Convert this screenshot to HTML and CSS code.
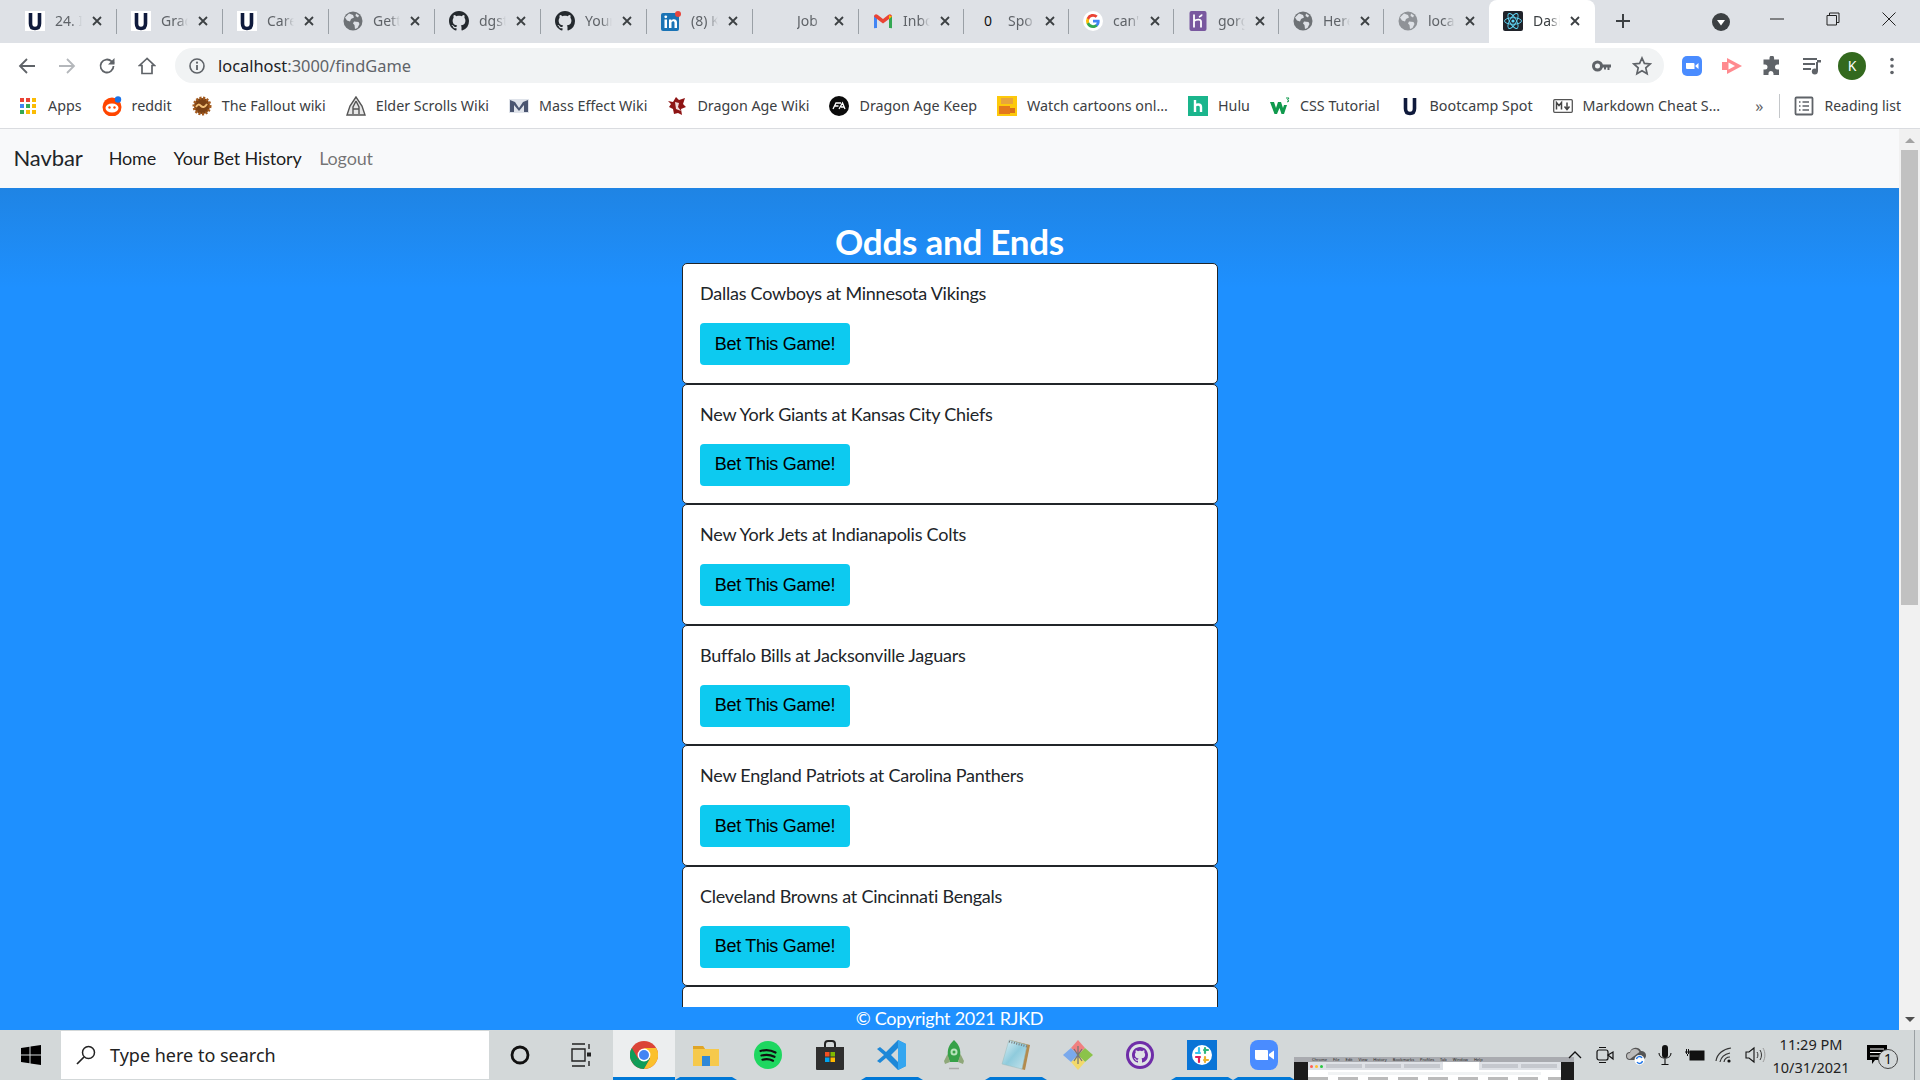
FILE: index.html
```html
<!DOCTYPE html>
<html lang="en">
<head>
  <meta charset="UTF-8" />
  <title>Dashboard</title>
  <link rel="stylesheet" href="styles.css">
</head>
<body>
  <svg class="defs" xmlns="http://www.w3.org/2000/svg">
    <symbol id="i-u" viewBox="0 0 20 20"><rect width="20" height="20" fill="#fff"/><path d="M5.500 2v10.500c0 3.600 1.800 5 4.500 5s4.500-1.400 4.500-5V2" fill="none" stroke="#0f1a3c" stroke-width="3.600"/></symbol>
    <symbol id="i-globe" viewBox="0 0 20 20"><circle cx="10" cy="10" r="9.500" fill="#6e7276"/><path d="M6 2.500l4 1.500 1 2.500-3 1.500-1 2.500-3-1-2-3zM11 10.500l4.500.5 1 2-2 4-2.500 1-.5-4-1.500-1.500zM13 2.500l3 2-1 2-2.500-1.500z" fill="#dee1e6"/></symbol>
    <symbol id="i-gh" viewBox="0 0 16 16"><path d="M8 0C3.580 0 0 3.580 0 8c0 3.540 2.290 6.530 5.470 7.590.4.070.55-.17.55-.38 0-.19-.01-.82-.01-1.490-2.010.37-2.530-.49-2.690-.94-.09-.23-.48-.94-.82-1.130-.28-.15-.68-.52-.01-.53.63-.01 1.080.58 1.230.82.72 1.210 1.870.87 2.330.66.07-.52.28-.87.51-1.070-1.780-.2-3.640-.89-3.640-3.950 0-.87.31-1.590.82-2.150-.08-.2-.36-1.020.08-2.120 0 0 .67-.21 2.200.82.64-.18 1.320-.27 2-.27.68 0 1.360.09 2 .27 1.530-1.040 2.200-.82 2.200-.82.44 1.100.16 1.920.08 2.120.51.56.82 1.270.82 2.150 0 3.070-1.870 3.750-3.650 3.950.29.25.54.73.54 1.480 0 1.070-.01 1.930-.01 2.200 0 .21.15.46.55.38A8.013 8.013 0 0016 8c0-4.420-3.580-8-8-8z" fill="currentColor"/></symbol>
    <symbol id="i-x" viewBox="0 0 12 12"><path d="M2 2l8 8M10 2l-8 8" stroke="#3c4043" stroke-width="1.800" fill="none"/></symbol>
    <linearGradient id="g-note" x1="0" y1="0" x2="1" y2="1"><stop offset="0" stop-color="#e4f3f7"/><stop offset=".5" stop-color="#8fcbdc"/><stop offset="1" stop-color="#c9e4ec"/></linearGradient>
  </svg>

  <div class="tabstrip">
    <div class="tab"><svg class="fav"><use href="#i-u"/></svg><span class="tab-title">24. I</span><svg class="tab-x"><use href="#i-x"/></svg></div>
    <div class="tab"><svg class="fav"><use href="#i-u"/></svg><span class="tab-title">Grad</span><svg class="tab-x"><use href="#i-x"/></svg></div>
    <div class="tab"><svg class="fav"><use href="#i-u"/></svg><span class="tab-title">Care</span><svg class="tab-x"><use href="#i-x"/></svg></div>
    <div class="tab"><svg class="fav"><use href="#i-globe"/></svg><span class="tab-title">Gett</span><svg class="tab-x"><use href="#i-x"/></svg></div>
    <div class="tab"><svg class="fav dark"><use href="#i-gh"/></svg><span class="tab-title">dgst</span><svg class="tab-x"><use href="#i-x"/></svg></div>
    <div class="tab"><svg class="fav dark"><use href="#i-gh"/></svg><span class="tab-title">Your</span><svg class="tab-x"><use href="#i-x"/></svg></div>
    <div class="tab">
      <svg class="fav" viewBox="0 0 20 20"><rect y="2" width="18" height="18" rx="2" fill="#1a73b5"/><circle cx="17" cy="3" r="3" fill="#e8453c"/><path d="M3.500 8.500h2.500V17H3.500zM8 8.500h2.400v1.200c.6-.9 1.500-1.400 2.600-1.400 2 0 3 1.200 3 3.400V17h-2.500v-5c0-1.100-.5-1.700-1.400-1.700-1 0-1.600.7-1.600 1.800V17H8z" fill="#fff"/><circle cx="4.750" cy="5.800" r="1.400" fill="#fff"/></svg>
      <span class="tab-title">(8) K</span><svg class="tab-x"><use href="#i-x"/></svg>
    </div>
    <div class="tab"><span class="fav"></span><span class="tab-title">Job</span><svg class="tab-x"><use href="#i-x"/></svg></div>
    <div class="tab">
      <svg class="fav" viewBox="0 0 20 20"><path d="M1 17V5l3 1v11H2.500A1.500 1.500 0 011 17z" fill="#4285f4"/><path d="M19 17V5l-3 1v11h1.500A1.500 1.500 0 0019 17z" fill="#34a853"/><path d="M1 5.500C1 3.500 3 2.500 4.500 3.700L10 8l5.500-4.300C17 2.500 19 3.500 19 5.500L16 8l-6 4.500L4 8z" fill="#ea4335"/><path d="M16 4.200l3 1.300L16 8z" fill="#fbbc04"/></svg>
      <span class="tab-title">Inbox</span><svg class="tab-x"><use href="#i-x"/></svg>
    </div>
    <div class="tab"><span class="fav fav-zero">0</span><span class="tab-title">Spo</span><svg class="tab-x"><use href="#i-x"/></svg></div>
    <div class="tab">
      <svg class="fav" viewBox="0 0 24 24"><circle cx="12" cy="12" r="12" fill="#fff"/><path d="M20 12.200c0-.6-.1-1.200-.2-1.700H12v3.200h4.500a3.900 3.900 0 01-1.700 2.500v2.100h2.700c1.600-1.400 2.500-3.500 2.500-6.100z" fill="#4285f4"/><path d="M12 20.400c2.300 0 4.200-.8 5.500-2.100l-2.700-2.100c-.7.5-1.700.8-2.800.8-2.200 0-4-1.500-4.700-3.400H4.500v2.100a8.300 8.300 0 007.500 4.700z" fill="#34a853"/><path d="M7.300 13.600a5 5 0 010-3.200V8.300H4.500a8.300 8.300 0 000 7.400z" fill="#fbbc05"/><path d="M12 6.900c1.200 0 2.300.4 3.200 1.200l2.400-2.400A8.300 8.300 0 004.500 8.300l2.800 2.100C8 8.400 9.800 6.900 12 6.900z" fill="#ea4335"/></svg>
      <span class="tab-title">can'</span><svg class="tab-x"><use href="#i-x"/></svg>
    </div>
    <div class="tab">
      <svg class="fav" viewBox="0 0 20 20"><rect x="1.500" width="17" height="20" rx="2" fill="#79589f"/><path d="M6 3.500v13M6 10c2-1.500 7-2.500 7 .5v6M14 3.500c-.5 1.500-1.500 2-3 2.500" fill="none" stroke="#fff" stroke-width="1.800"/></svg>
      <span class="tab-title">gorg</span><svg class="tab-x"><use href="#i-x"/></svg>
    </div>
    <div class="tab"><svg class="fav"><use href="#i-globe"/></svg><span class="tab-title">Here</span><svg class="tab-x"><use href="#i-x"/></svg></div>
    <div class="tab tab-last"><svg class="fav faded"><use href="#i-globe"/></svg><span class="tab-title">loca</span><svg class="tab-x"><use href="#i-x"/></svg></div>
    <div class="tab tab-active">
      <svg class="fav" viewBox="0 0 20 20"><rect width="20" height="20" rx="2" fill="#20232a"/><g fill="none" stroke="#61dafb" stroke-width=".9"><ellipse cx="10" cy="10" rx="8.500" ry="3.300"/><ellipse cx="10" cy="10" rx="8.500" ry="3.300" transform="rotate(60 10 10)"/><ellipse cx="10" cy="10" rx="8.500" ry="3.300" transform="rotate(120 10 10)"/></g><circle cx="10" cy="10" r="1.600" fill="#61dafb"/></svg>
      <span class="tab-title">Dash</span><svg class="tab-x"><use href="#i-x"/></svg>
    </div>
    <svg class="tab-plus" viewBox="0 0 16 16"><path d="M8 1v14M1 8h14" stroke="#3c4043" stroke-width="2"/></svg>
    <svg class="tab-search" viewBox="0 0 18 18"><circle cx="9" cy="9" r="9" fill="#3c4043"/><path d="M5 7h8l-4 5.500z" fill="#fff"/></svg>
    <div class="win-btns">
      <svg class="win-btn" viewBox="0 0 14 14"><path d="M0 7h14" stroke="#222" stroke-width="1"/></svg>
      <svg class="win-btn" viewBox="0 0 14 14"><path d="M1 3.500h9.500V13H1zM3.500 3.500V1H13v9.500h-2.500" fill="none" stroke="#222" stroke-width="1"/></svg>
      <svg class="win-btn" viewBox="0 0 14 14"><path d="M.5.500l13 13M13.500.500l-13 13" stroke="#222" stroke-width="1"/></svg>
    </div>
  </div>

  <div class="toolbar">
    <svg class="tool" viewBox="0 0 18 18"><path d="M17 9H2M9 2L2 9l7 7" fill="none" stroke="#5f6368" stroke-width="1.800"/></svg>
    <svg class="tool" viewBox="0 0 18 18"><path d="M1 9h15M9 2l7 7-7 7" fill="none" stroke="#b4b7bb" stroke-width="1.800"/></svg>
    <svg class="tool" viewBox="0 0 18 18"><path d="M15.500 9a6.500 6.500 0 11-1.900-4.600L16 6.500" fill="none" stroke="#5f6368" stroke-width="1.800"/><path d="M16.500 1v6.500H10z" fill="#5f6368"/></svg>
    <svg class="tool" viewBox="0 0 18 18"><path d="M9 1.500L1.500 8.500H4v8h10v-8h2.500z" fill="none" stroke="#5f6368" stroke-width="1.700"/></svg>
    <div class="omnibox">
      <svg class="omni-info" viewBox="0 0 16 16"><circle cx="8" cy="8" r="7" fill="none" stroke="#5f6368" stroke-width="1.600"/><path d="M8 7v5" stroke="#5f6368" stroke-width="1.800"/><circle cx="8" cy="4.700" r="1.100" fill="#5f6368"/></svg>
      <span class="omni-url">localhost<span class="omni-path">:3000/findGame</span></span>
      <svg class="omni-key" viewBox="0 0 20 12"><circle cx="5.500" cy="6" r="4" fill="none" stroke="#5f6368" stroke-width="3"/><path d="M9 4.500h10v3h-1.500v2.500h-2V7.500h-1.500v2h-2v-2H9z" fill="#5f6368"/></svg>
      <svg class="omni-star" viewBox="0 0 20 20"><path d="M10 2l2.400 5.400 5.800.6-4.400 3.900 1.300 5.800L10 14.700l-5.100 3 1.300-5.800L1.800 8l5.800-.6z" fill="none" stroke="#5f6368" stroke-width="1.700"/></svg>
    </div>
    <svg class="tool ext ext-first" viewBox="0 0 20 20"><rect width="20" height="20" rx="5" fill="#4a8cff"/><path d="M4 7h7.500a1 1 0 011 1v5H5a1 1 0 01-1-1zM13.500 9.500L16.500 7v6l-3-2.500z" fill="#fff"/></svg>
    <svg class="tool ext" viewBox="0 0 20 20"><path d="M0 6h5V2l15 8-15 8v-4H0z" fill="#ff8a8f"/><path d="M6.500 6.500v7l6.500-3.500z" fill="#fff"/></svg>
    <svg class="tool ext" viewBox="0 0 20 20"><path d="M7.500 2a2.300 2.300 0 014.600 0v1.500H17v5h-1.500a2.500 2.500 0 000 5H17V19h-5.500v-1.500a2.500 2.500 0 00-5 0V19H1.500v-5.500H3a2.500 2.500 0 000-5H1.500v-5h6z" fill="#5f6368"/></svg>
    <svg class="tool ext" viewBox="0 0 20 20"><path d="M1 3h14M1 8h12M1 13h8" stroke="#5f6368" stroke-width="1.800"/><path d="M15 6v9.500" stroke="#5f6368" stroke-width="2"/><circle cx="12.800" cy="15.500" r="3" fill="#5f6368"/><path d="M15 4h4v2.500h-4z" fill="#5f6368"/></svg>
    <span class="avatar">K</span>
    <svg class="tool ext" viewBox="0 0 20 20"><circle cx="10" cy="3.500" r="1.800" fill="#5f6368"/><circle cx="10" cy="10" r="1.800" fill="#5f6368"/><circle cx="10" cy="16.500" r="1.800" fill="#5f6368"/></svg>
  </div>

  <div class="bookmarks">
    <a class="bm">
      <svg class="fav" viewBox="0 0 20 20"><rect x="2" y="2" width="4" height="4" fill="#ea4335"/><rect x="8" y="2" width="4" height="4" fill="#ea4335"/><rect x="14" y="2" width="4" height="4" fill="#fbbc04"/><rect x="2" y="8" width="4" height="4" fill="#4285f4"/><rect x="8" y="8" width="4" height="4" fill="#34a853"/><rect x="14" y="8" width="4" height="4" fill="#fbbc04"/><rect x="2" y="14" width="4" height="4" fill="#34a853"/><rect x="8" y="14" width="4" height="4" fill="#fbbc04"/><rect x="14" y="14" width="4" height="4" fill="#fbbc04"/></svg>
      Apps
    </a>
    <a class="bm">
      <svg class="fav" viewBox="0 0 20 20"><circle cx="10" cy="11" r="9.500" fill="#ff4500"/><ellipse cx="10" cy="12" rx="6.500" ry="4.500" fill="#fff"/><circle cx="7.500" cy="11.500" r="1.200" fill="#ff4500"/><circle cx="12.500" cy="11.500" r="1.200" fill="#ff4500"/><circle cx="16" cy="3.500" r="3.200" fill="#1a73e8"/></svg>
      reddit
    </a>
    <a class="bm">
      <svg class="fav" viewBox="0 0 20 20"><circle cx="10" cy="10" r="8" fill="#7a4116" stroke="#a3591c" stroke-width="3" stroke-dasharray="2 1.500"/><path d="M4 11c2-3 3-3 5-1s4 1 6-2" fill="none" stroke="#f2c078" stroke-width="2"/></svg>
      The Fallout wiki
    </a>
    <a class="bm">
      <svg class="fav" viewBox="0 0 20 20"><path d="M10 1L4 10l-3 9h18l-3-9z" fill="#e6e6e6" stroke="#555" stroke-width="1.400"/><path d="M10 5l-3 6v7M10 5l3 6v7M7 13h6" fill="none" stroke="#555" stroke-width="1.400"/></svg>
      Elder Scrolls Wiki
    </a>
    <a class="bm">
      <svg class="fav" viewBox="0 0 20 20"><rect y="3" width="20" height="14" fill="#dfe3ea"/><path d="M1 16V4l5 2 4 6 4-6 5-2v12h-4V9l-5 6-5-6v7z" fill="#4a5570"/></svg>
      Mass Effect Wiki
    </a>
    <a class="bm">
      <svg class="fav" viewBox="0 0 20 20"><path d="M1 5l5 1 3-5 3 3 6-2-2 6 3 3-5 2 1 6-4-2-4 1-1-5-4-2 2-3z" fill="#8e1414"/><path d="M8 6l4 1-1 4 3 4-5-2z" fill="#f1d9d9"/></svg>
      Dragon Age Wiki
    </a>
    <a class="bm">
      <svg class="fav" viewBox="0 0 20 20"><circle cx="10" cy="10" r="10" fill="#0b0b0b"/><path d="M4 13l3-6h5M5.500 10h4M10 13l3.500-6 2.500 6M12 11h3" fill="none" stroke="#fff" stroke-width="1.300"/></svg>
      Dragon Age Keep
    </a>
    <a class="bm">
      <svg class="fav" viewBox="0 0 20 20"><rect width="20" height="20" fill="#fdc90b"/><rect x="4" y="2" width="12" height="6" fill="#e8a53c"/><rect x="2" y="10" width="11" height="8" fill="#e3781c"/><rect x="13" y="12" width="5" height="5" fill="#d9701a"/></svg>
      Watch cartoons onl...
    </a>
    <a class="bm">
      <svg class="fav" viewBox="0 0 20 20"><rect width="20" height="20" fill="#1ab58c"/><path d="M7 4v12M7 10c1-2 6-2.500 6 1v5" fill="none" stroke="#fff" stroke-width="2.400"/></svg>
      Hulu
    </a>
    <a class="bm">
      <svg class="fav" viewBox="0 0 20 20"><path d="M0 6h4l2 6 2-6h3l2 6 1-3h3l-3 9h-2.500L9.500 12 7 18H4.500z" fill="#109a4d"/><path d="M16 2h3l-1.500 2 1.500 1-2 1" fill="none" stroke="#109a4d"/></svg>
      CSS Tutorial
    </a>
    <a class="bm"><svg class="fav"><use href="#i-u"/></svg>Bootcamp Spot</a>
    <a class="bm">
      <svg class="fav" viewBox="0 0 20 14"><rect x=".7" y=".7" width="18.600" height="12.600" rx="1" fill="#fff" stroke="#555" stroke-width="1.300"/><path d="M3.500 10.500v-7l2.500 3 2.500-3v7M14 3.500v6M11.500 7.500l2.500 3 2.500-3" fill="none" stroke="#444" stroke-width="1.500"/></svg>
      Markdown Cheat S...
    </a>
    <span class="bm-more">»</span>
    <a class="bm bm-list">
      <svg class="fav" viewBox="0 0 20 20"><rect x="1.500" y="1.500" width="17" height="17" rx="1" fill="none" stroke="#5f6368" stroke-width="1.800"/><path d="M5 6h1.500M8.500 6H15M5 10h1.500M8.500 10H15M5 14h1.500M8.500 14H15" stroke="#5f6368" stroke-width="1.500"/></svg>
      Reading list
    </a>
  </div>

  <div class="viewport">
    <div class="page">
      <nav class="navbar">
        <a class="brand">Navbar</a>
        <a class="nav-link">Home</a>
        <a class="nav-link">Your Bet History</a>
        <a class="nav-link nav-muted">Logout</a>
      </nav>
      <main class="content">
        <h1 class="title">Odds and Ends</h1>
        <div class="card"><p>Dallas Cowboys at Minnesota Vikings</p><button class="bet">Bet This Game!</button></div>
        <div class="card"><p>New York Giants at Kansas City Chiefs</p><button class="bet">Bet This Game!</button></div>
        <div class="card"><p>New York Jets at Indianapolis Colts</p><button class="bet">Bet This Game!</button></div>
        <div class="card"><p>Buffalo Bills at Jacksonville Jaguars</p><button class="bet">Bet This Game!</button></div>
        <div class="card"><p>New England Patriots at Carolina Panthers</p><button class="bet">Bet This Game!</button></div>
        <div class="card"><p>Cleveland Browns at Cincinnati Bengals</p><button class="bet">Bet This Game!</button></div>
        <div class="card"></div>
      </main>
      <footer class="footer">© Copyright 2021 RJKD</footer>
    </div>
    <div class="scrollbar">
      <span class="sb-up"></span>
      <span class="sb-thumb"></span>
      <span class="sb-down"></span>
    </div>
  </div>

  <div class="taskbar">
    <div class="start">
      <svg viewBox="0 0 20 20" width="20" height="20"><path d="M0 3l8.500-1.200V9.500H0zM9.500 1.600L20 0v9.500H9.500zM0 10.500h8.500v7.700L0 17zM9.500 10.500H20V20L9.500 18.400z" fill="#000"/></svg>
    </div>
    <div class="search">
      <svg class="search-icon" viewBox="0 0 20 20"><circle cx="12.500" cy="7.500" r="6" fill="none" stroke="#222" stroke-width="1.500"/><path d="M8 12l-7 7" stroke="#222" stroke-width="1.700"/></svg>
      Type here to search
    </div>
    <div class="task-icon"><svg viewBox="0 0 20 20" width="20" height="20"><circle cx="10" cy="10" r="8" fill="none" stroke="#111" stroke-width="2.800"/></svg></div>
    <div class="task-icon task-view"><svg viewBox="0 0 20 24" width="20" height="24"><path d="M1 1h13M1 23h13M1 6h13v12H1zM18 1v5M18 18v5" fill="none" stroke="#222" stroke-width="1.400"/><rect x="16" y="9.500" width="4" height="4" fill="#222"/></svg></div>
    <div class="task-app active">
      <svg viewBox="0 0 24 24" width="28" height="28"><circle cx="12" cy="12" r="12" fill="#db4437"/><path d="M12 12L1.600 18A12 12 0 0012 24l5.200-9z" fill="#0f9d58"/><path d="M12 24a12 12 0 0010.400-18H12l5.200 9z" fill="#fbc02d"/><path d="M12 12L1.600 18A12 12 0 011.600 6l5.200 9z" fill="#0f9d58"/><circle cx="12" cy="12" r="5.500" fill="#fff"/><circle cx="12" cy="12" r="4.300" fill="#4285f4"/></svg>
    </div>
    <div class="task-app running">
      <svg viewBox="0 0 28 28" width="28" height="28"><path d="M1 5h10l2 3h14v17H1z" fill="#f6c94c"/><path d="M1 5h10l2 3H1z" fill="#e0a526"/><path d="M10 15h8v10h-8z" fill="#2f88d8"/></svg>
    </div>
    <div class="task-app"><svg viewBox="0 0 28 28" width="28" height="28"><circle cx="14" cy="14" r="14" fill="#1ed760"/><path d="M6.500 10c5-1.500 10.500-1 15 1.500M7.500 14.500c4.500-1.200 9-.8 13 1.300M8.500 18.700c3.500-1 7.500-.6 10.500 1" fill="none" stroke="#111" stroke-width="2.200" stroke-linecap="round"/></svg></div>
    <div class="task-app"><svg viewBox="0 0 28 30" width="28" height="30"><path d="M9 8V4a3 3 0 013-3h4a3 3 0 013 3v4" fill="none" stroke="#222" stroke-width="2"/><path d="M0 7h28v22a1 1 0 01-1 1H1a1 1 0 01-1-1z" fill="#2f2f2f"/><rect x="9" y="12" width="4.500" height="4.500" fill="#f25022"/><rect x="14.500" y="12" width="4.500" height="4.500" fill="#7fba00"/><rect x="9" y="17.500" width="4.500" height="4.500" fill="#00a4ef"/><rect x="14.500" y="17.500" width="4.500" height="4.500" fill="#ffb900"/></svg></div>
    <div class="task-app running"><svg viewBox="0 0 30 30" width="30" height="30"><path d="M21 0l8 4v22l-8 4L9 18l-6 5-3-2 7-6-7-6 3-2 6 5z" fill="#1e88d8"/><path d="M21 0l8 4v22l-8 4z" fill="#35a6f0"/><path d="M21 8l-7 7 7 7z" fill="#d3d8d9"/></svg></div>
    <div class="task-app"><svg viewBox="0 0 24 32" width="24" height="32"><path d="M12 1c5.500 5 7 10 6 17l-2 5H8l-2-5C5 11 6.500 6 12 1z" fill="#36a148"/><circle cx="12" cy="13" r="3.500" fill="#b7e3bb"/><circle cx="12" cy="13" r="1.500" fill="#36a148"/><path d="M5.500 15L2 22l1 3 5-2zM18.500 15l3.500 7-1 3-5-2z" fill="#8fa87a"/><path d="M7 29.500h10" stroke="#aaa" stroke-width="1.500"/></svg></div>
    <div class="task-app running"><svg viewBox="0 0 30 32" width="30" height="32"><path d="M9 1l20 5-5 25-4-1z" fill="#b38b4d"/><path d="M8 1l18 5-5 24L1 25z" fill="url(#g-note)" stroke="#9bb" stroke-width=".5"/><path d="M8 2.500l18 5" stroke="#777" stroke-width="2" stroke-dasharray="1 1.500"/></svg></div>
    <div class="task-app"><svg viewBox="0 0 30 30" width="30" height="30"><path d="M15 15L8 8l7-8 7 8z" fill="#f08080"/><path d="M15 15l7-7 8 7-8 7z" fill="#8bc34a"/><path d="M15 15l7 7-7 8-7-8z" fill="#f2d96b"/><path d="M15 15l-7 7-8-7 8-7z" fill="#7aa9ec"/><path d="M15 6v18M11 9l4 6 4-6M11 21l4-6 4 6" fill="none" stroke="#777" stroke-width="1.300"/></svg></div>
    <div class="task-app"><svg viewBox="0 0 28 28" width="28" height="28"><circle cx="14" cy="14" r="14" fill="#6f2da8"/><circle cx="14" cy="14" r="11" fill="#dfe3e6"/><g color="#6f2da8"><use href="#i-gh" x="6" y="6" width="16" height="16"/></g></svg></div>
    <div class="task-app running"><svg viewBox="0 0 30 30" width="30" height="30"><rect width="30" height="30" fill="#0a74d6"/><circle cx="15" cy="15" r="10" fill="#fff"/><path d="M12 8v5M9 13h4" stroke="#36c5f0" stroke-width="2.200" stroke-linecap="round"/><path d="M18 8v5M17 10h4" stroke="#2eb67d" stroke-width="2.200" stroke-linecap="round"/><path d="M18 22v-5M17 20h4" stroke="#ecb22e" stroke-width="2.200" stroke-linecap="round"/><path d="M12 22v-5M9 17h4" stroke="#e01e5a" stroke-width="2.200" stroke-linecap="round"/></svg></div>
    <div class="task-app running"><svg viewBox="0 0 28 30" width="28" height="30"><rect width="28" height="30" rx="8" fill="#4a8cff"/><path d="M5 10h12a1 1 0 011 1v9H7a2 2 0 01-2-2zM19 14l5-3.500v9L19 16z" fill="#fff"/></svg></div>
    <div class="thumb">
      <div class="thumb-bar"><span>Chrome</span><span>File</span><span>Edit</span><span>View</span><span>History</span><span>Bookmarks</span><span>Profiles</span><span>Tab</span><span>Window</span><span>Help</span></div>
      <div class="thumb-tabs">
        <i class="dot dot-r"></i><i class="dot dot-y"></i><i class="dot dot-g"></i>
        <b class="mini-tab"></b><b class="mini-tab"></b><b class="mini-tab"></b><b class="mini-tab mini-on"></b><b class="mini-tab"></b><b class="mini-tab"></b>
      </div>
      <div class="thumb-tool"><b class="mini-omni"></b></div>
      <div class="thumb-bm"></div>
    </div>
    <div class="tray">
      <svg class="tray-item" viewBox="0 0 20 20"><path d="M4 13l6-6 6 6" fill="none" stroke="#111" stroke-width="1.300"/></svg>
      <svg class="tray-item" viewBox="0 0 20 20"><rect x="2" y="5" width="11" height="10" rx="2" fill="none" stroke="#111" stroke-width="1.200"/><path d="M13 10l5-3v7z" fill="none" stroke="#111" stroke-width="1.200"/><path d="M4 2.500h7M4 17.500h7" stroke="#111"/></svg>
      <svg class="tray-item" viewBox="0 0 20 20"><path d="M5 15a4 4 0 010-8 6 6 0 0111-1 4.500 4.500 0 011 9z" fill="#555"/><path d="M5 14a3 3 0 010-6 5 5 0 019.500-1z" fill="#bbb"/><circle cx="14.500" cy="15" r="5" fill="#fff"/><path d="M11.500 14a3 3 0 015.500-1M17.500 16a3 3 0 01-5.500 1" fill="none" stroke="#1a73e8" stroke-width="1.400"/></svg>
      <svg class="tray-item" viewBox="0 0 20 20"><rect x="7" y="0" width="6" height="13" rx="3" fill="#111"/><path d="M4 8c0 7 12 7 12 0M10 14v5M6.500 19.500h7" fill="none" stroke="#111" stroke-width="1.100"/></svg>
      <svg class="tray-item" viewBox="0 0 20 20"><rect x="5" y="6" width="14" height="9" fill="#111" stroke="#111"/><path d="M0 7h5M1.500 4v5M3.500 4v5M2.500 9v2" stroke="#111" stroke-width="1"/></svg>
      <svg class="tray-item" viewBox="0 0 20 20"><path d="M1 16C2 9 8 4 16 3M5 17c1-5 5-8 10-9M9 17c.5-3 3-5 6-5" fill="none" stroke="#333" stroke-width="1.200"/><circle cx="14" cy="16" r="1.600" fill="#111"/></svg>
      <svg class="tray-item" viewBox="0 0 20 20"><path d="M1 7h3l5-4v14l-5-4H1z" fill="none" stroke="#111" stroke-width="1.100"/><path d="M12 7c1.200 1.500 1.200 4.500 0 6M15 5c2 3 2 7 0 10" fill="none" stroke="#333"/><path d="M18 3c2.500 4 2.500 10 0 14" fill="none" stroke="#999"/></svg>
      <div class="clock"><span>11:29 PM</span><span>10/31/2021</span></div>
      <div class="notify">
        <svg viewBox="0 0 20 20" width="20" height="20"><path d="M0 0h20v15H8l-3 4v-4H0z" fill="#000"/><path d="M3 4h14M3 7.500h14M3 11h14" stroke="#fff" stroke-width="1.100"/></svg>
        <span class="notify-count">1</span>
      </div>
      <span class="show-desktop"></span>
    </div>
  </div>
</body>
</html>
```

FILE: styles.css
```css
* {
  box-sizing: border-box;
}
html,
body {
  margin: 0;
  height: 100%;
}
body {
  height: 1080px;
  overflow: hidden;
  display: flex;
  flex-direction: column;
  font-family: "Noto Sans", sans-serif;
  background: #fff;
}
.defs {
  position: absolute;
  width: 0;
  height: 0;
}
.fav {
  width: 20px;
  height: 20px;
  flex: none;
}
.fav.dark {
  color: #24292e;
}
.fav.faded {
  opacity: 0.7;
}
.fav-zero {
  font-size: 14px;
  line-height: 20px;
  text-align: center;
  color: #111;
}

/* tab strip */
.tabstrip {
  height: 43px;
  flex: none;
  display: flex;
  align-items: flex-start;
  padding-left: 11.4px;
  background: #dee1e6;
}
.tab {
  width: 106px;
  height: 25px;
  margin-top: 9px;
  flex: none;
  display: flex;
  align-items: center;
  padding: 0 0 2px 13.6px;
  border-right: 1px solid #9aa0a6;
}
.tab:nth-child(n+9) {
  width: 105px;
}
.tab-last {
  border-right: 0;
}
.tab.tab-active {
  width: 106px;
  height: 43px;
  margin-top: 0;
  border: 0;
  border-radius: 8px 8px 0 0;
  background: #fff;
}
.tab-title {
  width: 27px;
  margin-left: 10px;
  overflow: hidden;
  white-space: nowrap;
  font-size: 14px;
  color: #5f6368;
  -webkit-mask-image: linear-gradient(to right, #000 60%, transparent);
  mask-image: linear-gradient(to right, #000 60%, transparent);
}
.tab-active .tab-title {
  color: #3c4043;
}
.tab-x {
  width: 12px;
  height: 12px;
  margin-left: 9px;
  flex: none;
}
.tab-plus {
  width: 16px;
  height: 16px;
  margin: 13px 0 0 20px;
  flex: none;
}
.tab-search {
  width: 18px;
  height: 18px;
  margin: 13px 0 0 81px;
  flex: none;
}
.win-btns {
  display: flex;
  gap: 42px;
  margin: 12px 0 0 40px;
}
.win-btn {
  width: 14px;
  height: 14px;
}

/* toolbar */
.toolbar {
  height: 45px;
  flex: none;
  display: flex;
  align-items: flex-start;
  padding: 5px 0 0 18px;
}
.tool {
  width: 18px;
  height: 18px;
  margin: 9px 22px 0 0;
  flex: none;
}
.omnibox {
  width: 1489px;
  height: 35px;
  margin-left: -3px;
  flex: none;
  display: flex;
  align-items: center;
  padding: 0 12px 0 14px;
  border-radius: 18px;
  background: #f1f3f4;
}
.omni-info {
  width: 16px;
  height: 16px;
  flex: none;
}
.omni-url {
  margin-left: 13px;
  font-size: 16.4px;
  color: #202124;
}
.omni-path {
  color: #5f6368;
}
.omni-key {
  width: 20px;
  height: 12px;
  margin-left: auto;
}
.omni-star {
  width: 20px;
  height: 20px;
  margin-left: 20px;
}
.ext {
  width: 20px;
  height: 20px;
  margin: 8px 20px 0 0;
}
.ext-first {
  margin-left: 18px;
}
.avatar {
  width: 28px;
  height: 28px;
  margin: 4px 16px 0 -4px;
  flex: none;
  border-radius: 50%;
  background: #33691e;
  color: #fff;
  font-size: 14px;
  line-height: 28px;
  text-align: center;
}

/* bookmarks */
.bookmarks {
  height: 41px;
  flex: none;
  display: flex;
  align-items: center;
  gap: 20px;
  padding: 0 19px 5px 18px;
  border-bottom: 1px solid #dadce0;
  font-size: 14.3px;
  color: #3c4043;
}
.bm {
  display: flex;
  align-items: center;
  gap: 10px;
  white-space: nowrap;
}
.bm-more {
  margin-left: auto;
  font-size: 16px;
  color: #5f6368;
}
.bm-list {
  height: 24px;
  padding-left: 14px;
  margin-left: -4px;
  border-left: 1px solid #c4c7ca;
  font-size: 14px;
}

/* page */
.viewport {
  flex: 1;
  min-height: 0;
  display: flex;
}
.page {
  flex: 1;
  min-width: 0;
  display: flex;
  flex-direction: column;
  background: #1e90ff;
  font-family: Lato, sans-serif;
}
.navbar {
  height: 59px;
  flex: none;
  display: flex;
  align-items: center;
  padding: 0 0 2px 13.5px;
  background: #f8f9fa;
  font-size: 18px;
  letter-spacing: -0.15px;
}
.brand {
  margin-right: 26px;
  font-size: 22px;
  letter-spacing: -0.1px;
  color: #212529;
}
.nav-link {
  margin-right: 17.5px;
  color: rgba(0, 0, 0, 0.9);
}
.nav-muted {
  color: rgba(0, 0, 0, 0.55);
}
.content {
  flex: 1;
  min-height: 0;
  overflow: hidden;
  padding-top: 31px;
  background: linear-gradient(#1f84e4, #1e90ff 100px);
}
.title {
  margin: 0;
  font-size: 35px;
  font-weight: 700;
  line-height: 44px;
  letter-spacing: -0.25px;
  text-align: center;
  color: #fff;
}
.card {
  width: 536px;
  height: 120.5px;
  margin: 0 auto;
  padding: 16px 17.5px;
  border: 1px solid #212529;
  border-radius: 5px;
  background: #fff;
  font-size: 18px;
  color: #212529;
}
.card p {
  margin: 0 0 16px;
  line-height: 27px;
  letter-spacing: -0.24px;
}
.bet {
  display: block;
  width: 150px;
  height: 42px;
  padding: 0;
  border: 0;
  border-radius: 4px;
  background: #0dcaf0;
  font-family: "Liberation Sans", Arial, sans-serif;
  font-size: 18px;
  letter-spacing: -0.3px;
  color: #000;
}
.footer {
  height: 23px;
  flex: none;
  font-size: 18px;
  line-height: 22px;
  letter-spacing: -0.25px;
  text-align: center;
  color: #fff;
}
.scrollbar {
  width: 21px;
  flex: none;
  display: flex;
  flex-direction: column;
  align-items: center;
  background: #f1f1f1;
}
.sb-up,
.sb-down {
  width: 0;
  height: 0;
  flex: none;
  border-left: 5px solid transparent;
  border-right: 5px solid transparent;
}
.sb-up {
  margin-top: 9px;
  border-bottom: 5px solid #a3a3a3;
}
.sb-thumb {
  width: 17px;
  height: 455px;
  margin-top: 7px;
  flex: none;
  background: #c1c1c1;
}
.sb-down {
  margin-top: auto;
  margin-bottom: 8px;
  border-top: 5px solid #505050;
}

/* taskbar */
.taskbar {
  height: 50px;
  flex: none;
  display: flex;
  align-items: stretch;
  background: #d3d8d9;
  overflow: hidden;
}
.start {
  width: 61px;
  flex: none;
  display: flex;
  align-items: center;
  justify-content: center;
}
.search {
  width: 428px;
  margin: 1px 0;
  flex: none;
  display: flex;
  align-items: center;
  padding-left: 15px;
  background: #fff;
  font-size: 18px;
  color: #222;
}
.search-icon {
  width: 20px;
  height: 20px;
  margin-right: 14px;
}
.task-icon {
  width: 61.5px;
  flex: none;
  display: flex;
  align-items: center;
  justify-content: center;
}
.task-view {
  margin-right: 1px;
}
.task-app {
  width: 62px;
  flex: none;
  display: flex;
  align-items: center;
  justify-content: center;
}
.task-app.active {
  background: #eceeef;
  border-bottom: 3px solid #0078d7;
  padding-top: 3px;
}
.task-app.running {
  padding-top: 3px;
  border-bottom: 3px solid #0078d7;
  border-left: 5px solid #d3d8d9;
  border-right: 5px solid #d3d8d9;
}
.thumb {
  width: 280px;
  margin: 27px -14px 0 -1px;
  flex: none;
  padding: 0 13px 0 14px;
  background: #1c1c1c;
}
.thumb-bar {
  height: 5px;
  display: flex;
  gap: 6px;
  overflow: hidden;
  margin: 0 -13px 0 -14px;
  padding-left: 18px;
  background: #a9abb0;
  font-size: 4px;
  line-height: 5px;
  color: #222;
}
.thumb-tabs {
  height: 8px;
  display: flex;
  align-items: center;
  gap: 2px;
  padding-left: 2px;
  background: #dee1e6;
}
.dot {
  width: 3px;
  height: 3px;
  border-radius: 50%;
}
.dot-r {
  background: #ff5f57;
}
.dot-y {
  background: #febc2e;
}
.dot-g {
  background: #28c840;
}
.mini-tab {
  width: 36px;
  height: 4px;
  margin-left: 1px;
  background: #c5c8ce;
}
.mini-on {
  height: 8px;
  background: #fff;
}
.thumb-tool {
  height: 7px;
  padding: 2px 20px;
  background: #fff;
}
.mini-omni {
  display: block;
  height: 3px;
  background: #f1f3f4;
}
.thumb-bm {
  height: 3px;
  background: repeating-linear-gradient(to right, #bbb 0 20px, #fff 20px 30px);
}
.tray {
  flex: 1;
  display: flex;
  align-items: center;
}
.tray-item {
  width: 30px;
  height: 20px;
  flex: none;
}
.clock {
  width: 82px;
  flex: none;
  display: flex;
  flex-direction: column;
  gap: 3px;
  align-items: center;
  font-size: 14.5px;
  line-height: 20px;
  color: #222;
}
.notify {
  width: 50px;
  flex: none;
  display: flex;
  align-items: center;
  justify-content: center;
  position: relative;
}
.notify-count {
  position: absolute;
  left: 26px;
  top: 4px;
  width: 20px;
  height: 20px;
  border: 1px solid #444;
  border-radius: 50%;
  background: #d3d8d9;
  font-size: 14px;
  line-height: 18px;
  text-align: center;
  color: #111;
}
.show-desktop {
  height: 100%;
  margin-left: 12px;
  border-left: 1px solid #9aa0a3;
}
```
